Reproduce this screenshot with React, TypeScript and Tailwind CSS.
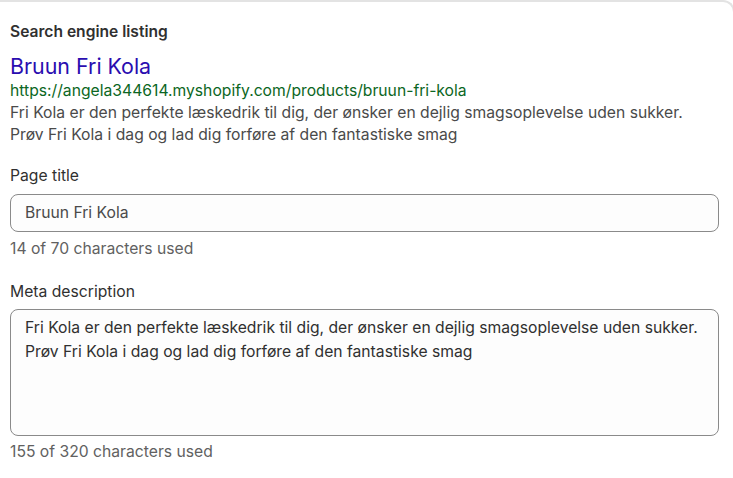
export default function App() {
  return (
    <div className="w-[733px] h-[478px] overflow-hidden bg-white font-['Inter',sans-serif]">
      <div className="w-[735px] border-t-2 border-r-2 border-[#e3e3e3] rounded-tr-xl px-[10px] pt-[20px] pb-6">
        <div className="text-[15.6px] leading-5 font-semibold text-[#303030]">
          Search engine listing
        </div>

        <div className="mt-[9px]">
          <div className="text-[21.4px] leading-[30px] text-[#2a0db0]">Bruun Fri Kola</div>
          <div className="text-[15.7px] leading-[22px] text-[#0b6623] -mt-[1px]">
            https://angela344614.myshopify.com/products/bruun-fri-kola
          </div>
          <div className="text-[15.7px] leading-[22px] text-[#4a4a4a]">
            Fri Kola er den perfekte læskedrik til dig, der ønsker en dejlig smagsoplevelse uden sukker.
            <br />
            Prøv Fri Kola i dag og lad dig forføre af den fantastiske smag
          </div>
        </div>

        <div className="mt-[19px]">
          <label className="block text-[15.7px] leading-[22px] text-[#303030]">Page title</label>
          <div className="mt-[7px] w-[709px] h-[38px] rounded-lg border border-[#8a8a8a] bg-[#fdfdfd] px-[14px] flex items-center text-[15.7px] text-[#4a4a4a]">
            Bruun Fri Kola
          </div>
          <div className="mt-[6px] text-[15.7px] leading-[22px] text-[#616161]">14 of 70 characters used</div>
        </div>

        <div className="mt-[21px]">
          <label className="block text-[15.7px] leading-[22px] text-[#303030]">Meta description</label>
          <div className="mt-[6px] w-[709px] h-[127px] rounded-lg border border-[#8a8a8a] bg-[#fdfdfd] px-[14px] pt-[6px] text-[15.7px] leading-6 text-[#303030]">
            Fri Kola er den perfekte læskedrik til dig, der ønsker en dejlig smagsoplevelse uden sukker.
            <br />
            Prøv Fri Kola i dag og lad dig forføre af den fantastiske smag
          </div>
          <div className="mt-[5px] text-[15.7px] leading-[22px] text-[#616161]">155 of 320 characters used</div>
        </div>
      </div>
    </div>
  );
}
